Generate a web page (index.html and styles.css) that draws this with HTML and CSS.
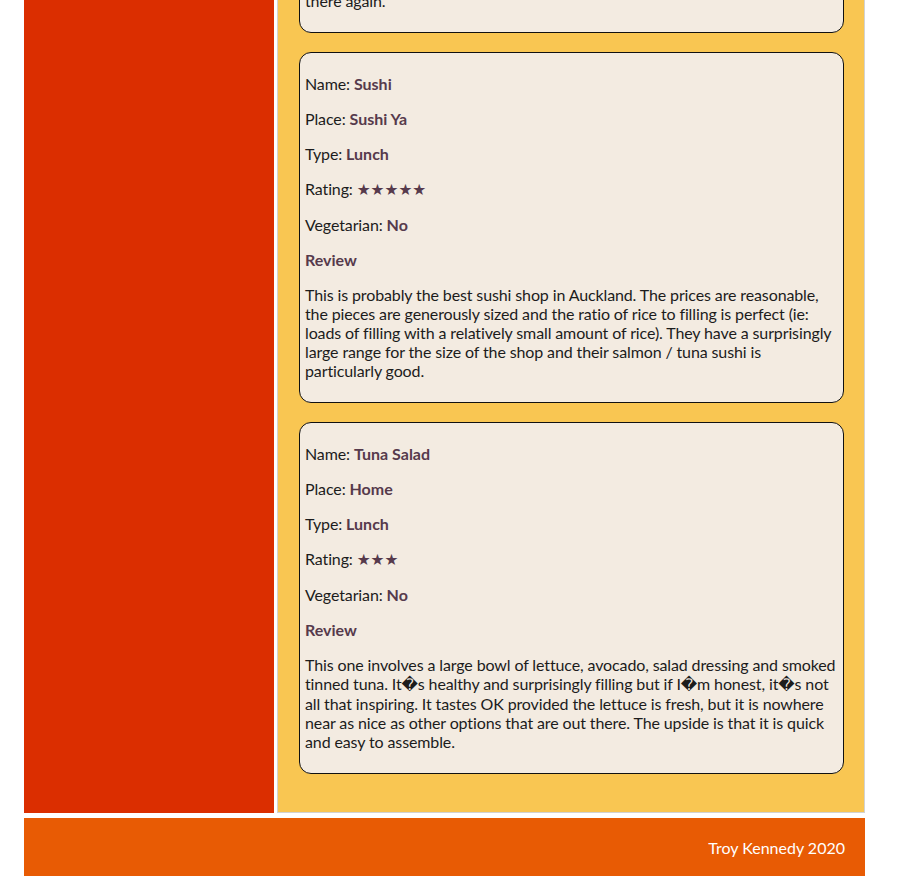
FILE: index.html
```html
<!DOCTYPE html>
<html lang="en">
<head>
<meta charset="utf-8">
<title>Food Reviews</title>
<link rel="stylesheet" href="styles.css">
</head>
<body>
<div class="page">
  <div class="layout">
    <aside class="sidebar"></aside>
    <main class="main">
      <section class="card card--cut">
        <p>there again.</p>
      </section>
      <section class="card">
        <p>Name: <span class="val">Sushi</span></p>
        <p>Place: <span class="val">Sushi Ya</span></p>
        <p>Type: <span class="val">Lunch</span></p>
        <p>Rating: <span class="val stars">★★★★★</span></p>
        <p>Vegetarian: <span class="val">No</span></p>
        <p class="val">Review</p>
        <p>This is probably the best sushi shop in Auckland. The prices are reasonable, the pieces are generously sized and the ratio of rice to filling is perfect (ie: loads of filling with a relatively small amount of rice). They have a surprisingly large range for the size of the shop and their salmon / tuna sushi is particularly good.</p>
      </section>
      <section class="card">
        <p>Name: <span class="val">Tuna Salad</span></p>
        <p>Place: <span class="val">Home</span></p>
        <p>Type: <span class="val">Lunch</span></p>
        <p>Rating: <span class="val stars">★★★</span></p>
        <p>Vegetarian: <span class="val">No</span></p>
        <p class="val">Review</p>
        <p>This one involves a large bowl of lettuce, avocado, salad dressing and smoked tinned tuna. It�s healthy and surprisingly filling but if I�m honest, it�s not all that inspiring. It tastes OK provided the lettuce is fresh, but it is nowhere near as nice as other options that are out there. The upside is that it is quick and easy to assemble.</p>
      </section>
    </main>
  </div>
  <footer class="footer">Troy Kennedy 2020</footer>
</div>
</body>
</html>
```

FILE: styles.css
```css
html, body {
  margin: 0;
  padding: 0;
  background: #ffffff;
}

body {
  font-family: "Lato", "DejaVu Sans", sans-serif;
  font-size: 16px;
  line-height: normal;
  color: #1c1c1c;
  overflow: hidden;
}

.page {
  width: 841px;
  margin-left: 24px;
}

.layout {
  display: grid;
  grid-template-columns: 250px 588px;
  column-gap: 3px;
}

.sidebar {
  background: #db2e00;
}

.main {
  background: #f9c652;
  border: 1px solid #d2d2d2;
  border-top: none;
  padding: 0 20px 19px 21px;
}

.card {
  background: #f3ebe1;
  border: 1px solid #111111;
  border-radius: 12px;
  padding: 5px 5px 6px;
  margin-bottom: 19px;
  overflow: hidden;
}

.card p {
  margin: 16px 0;
  letter-spacing: -0.12px;
}

.card--cut {
  margin-top: -31px;
}

.val {
  color: #563a4c;
  font-weight: bold;
  letter-spacing: 0;
}

.card p.val {
  letter-spacing: 0;
}

.stars {
  font-family: "DejaVu Sans", sans-serif;
  font-size: 15.5px;
}

.footer {
  margin-top: 5px;
  background: #e85b04;
  color: #ffffff;
  text-align: right;
  padding: 20px 20px 19px;
}
```
